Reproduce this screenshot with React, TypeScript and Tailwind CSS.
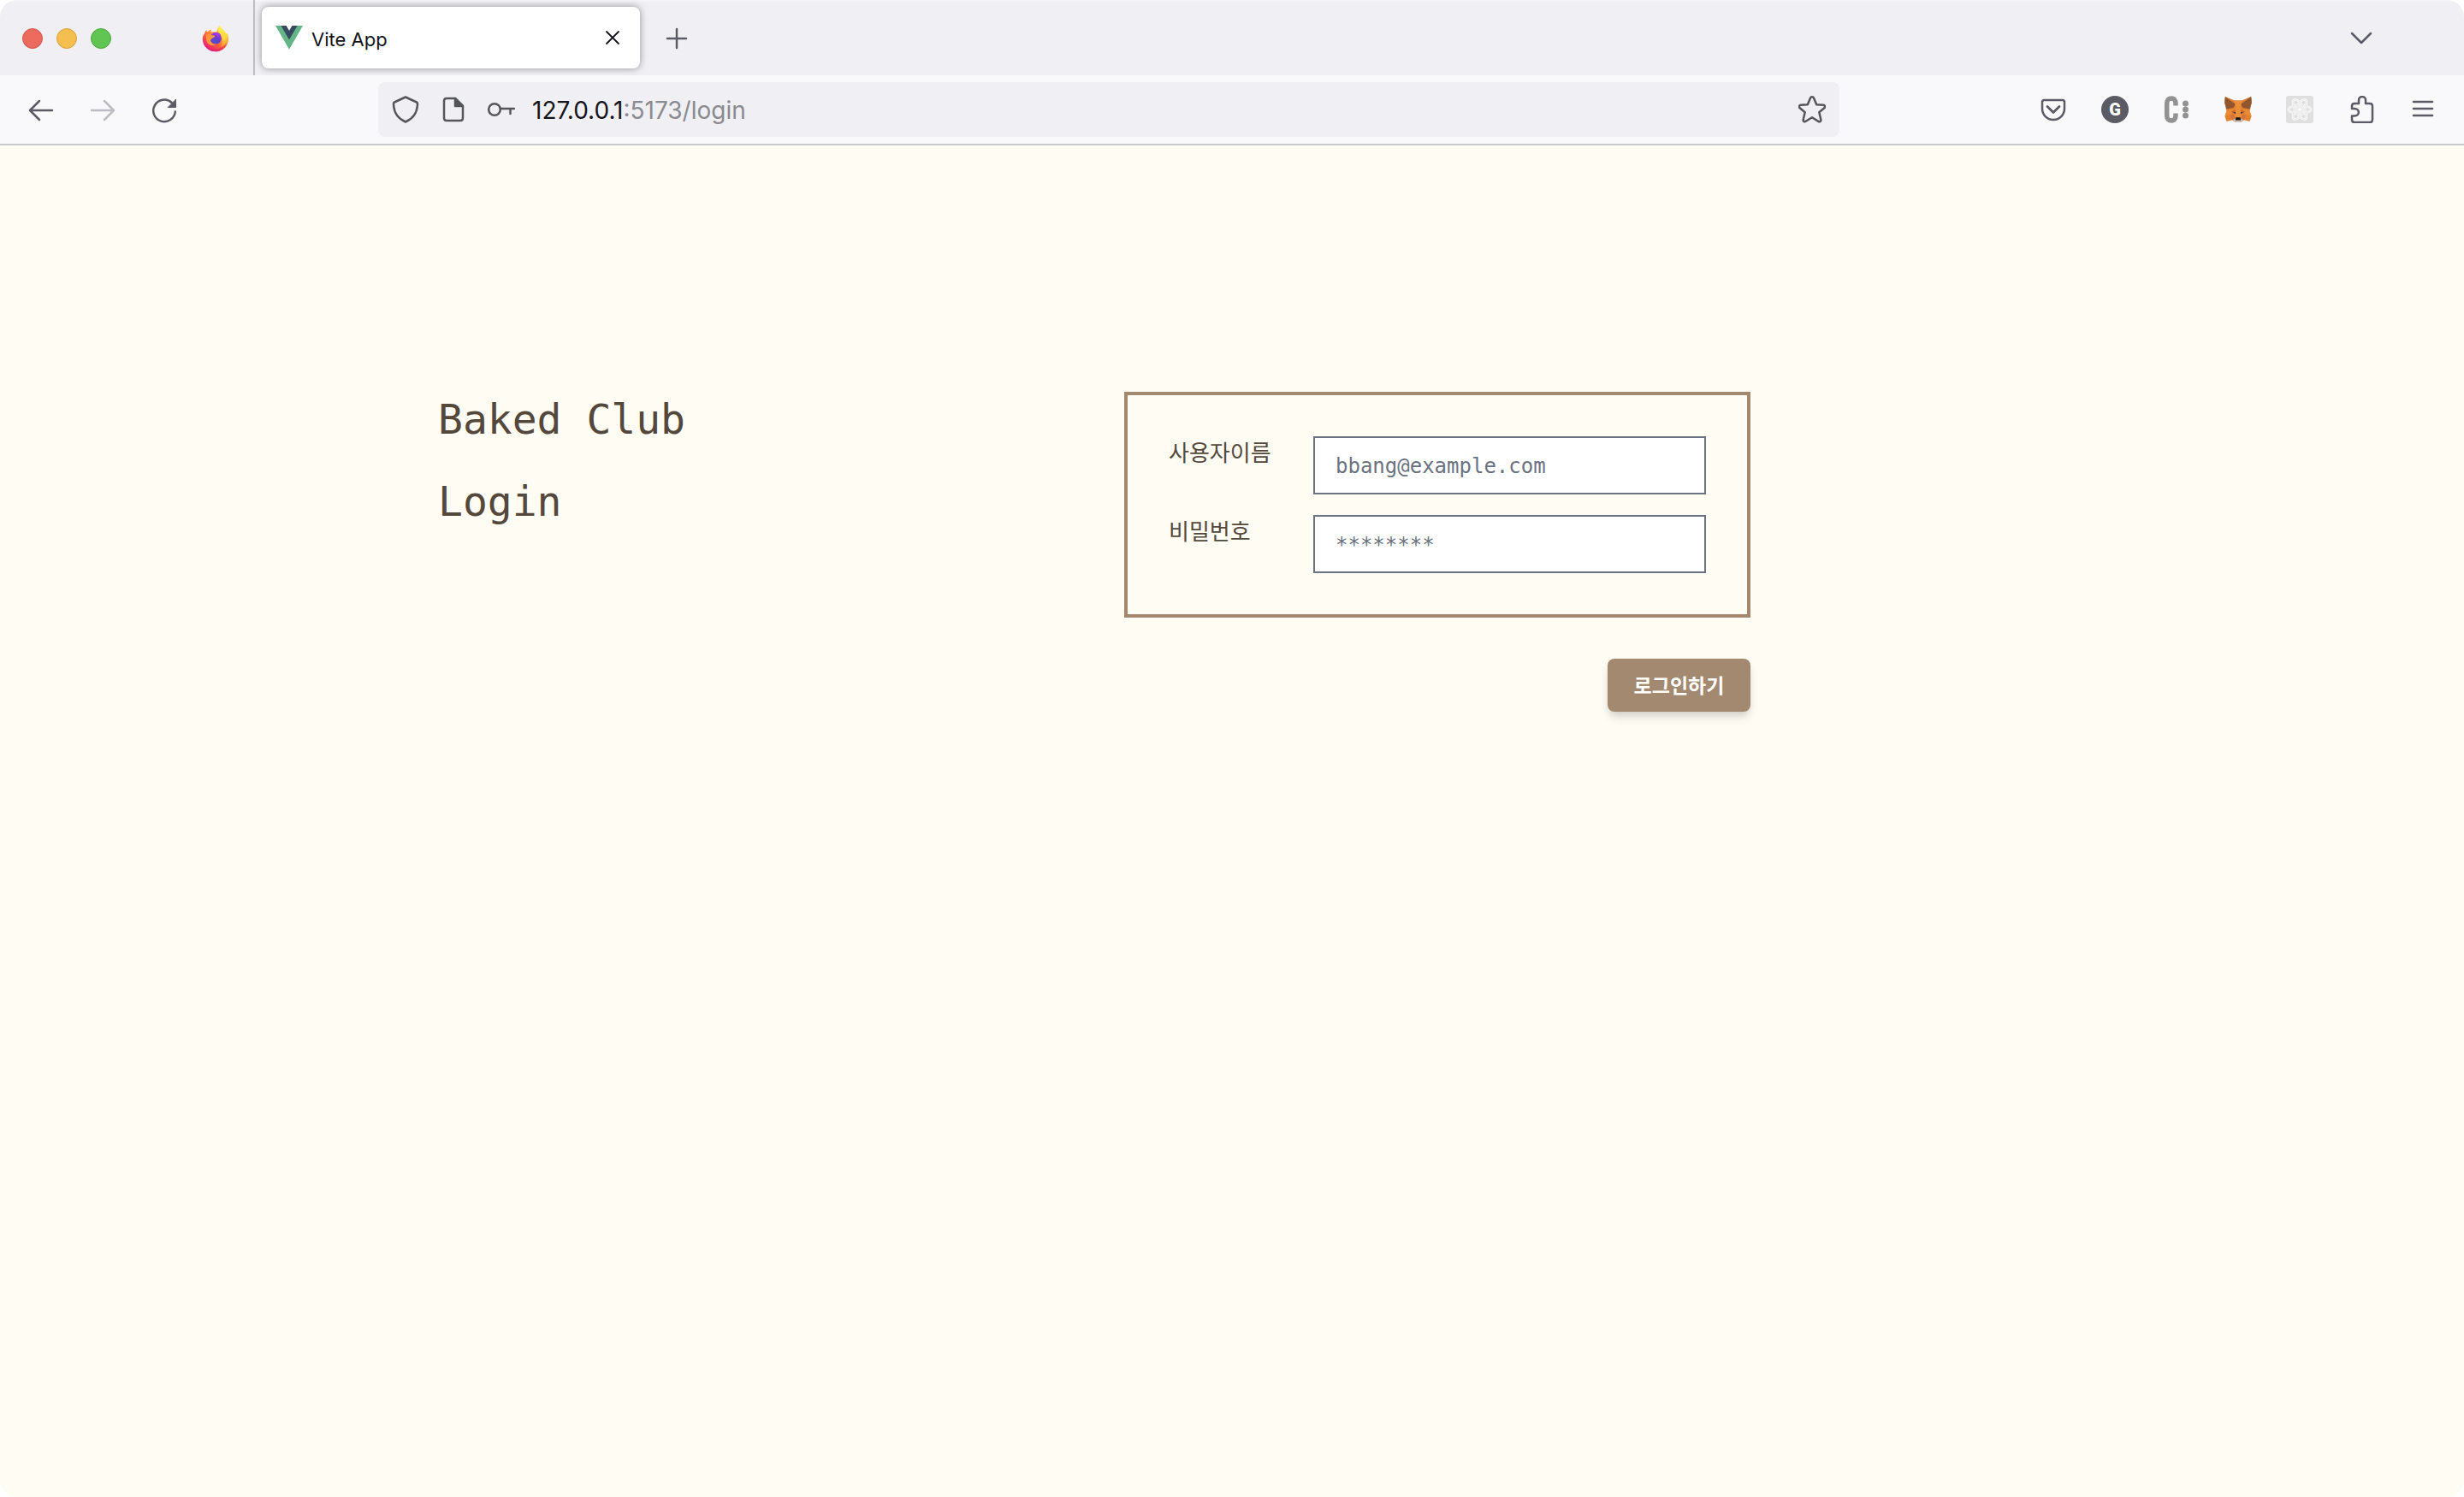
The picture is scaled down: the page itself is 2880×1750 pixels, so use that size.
import React from 'react';

function FirefoxLogo() {
  return (
    <svg viewBox="0 0 32 32" className="size-8" aria-hidden="true">
      <defs>
        <linearGradient id="ff-body" x1="0.85" y1="0.1" x2="0.2" y2="0.95">
          <stop offset="0" stopColor="#fff44f" />
          <stop offset="0.35" stopColor="#ffa436" />
          <stop offset="0.65" stopColor="#ff5b3a" />
          <stop offset="1" stopColor="#e31587" />
        </linearGradient>
        <linearGradient id="ff-flame" x1="0.5" y1="0" x2="0.6" y2="1">
          <stop offset="0" stopColor="#fff44f" />
          <stop offset="0.6" stopColor="#ffd43f" />
          <stop offset="1" stopColor="#ff9340" />
        </linearGradient>
        <radialGradient id="ff-globe" cx="0.4" cy="0.8" r="0.9">
          <stop offset="0" stopColor="#4f52c9" />
          <stop offset="0.5" stopColor="#6b3bd0" />
          <stop offset="1" stopColor="#b13be0" />
        </radialGradient>
      </defs>
      <path
        d="M3 10.5C3.3 8.600 4 7.200 5.200 6.200C5.300 7.400 5.800 8 6.500 8.300C7.800 6.800 9.400 6 11.200 5.700C10.600 6.500 10.400 7.300 10.600 8.200H17C17.500 5 19.500 2.500 20.800 .500C21.300 3.500 24 5.200 26.300 7.500C27.500 8.700 28.500 10 29 11.500L29.300 8.900C31 12 31.300 15.500 31 18C30 26 23.500 31.300 16 31.300C7.500 31.300 .800 25 .800 16.500C.800 14.300 1.500 12 3 10.500Z"
        fill="url(#ff-body)"
      />
      <path
        d="M20.800 .500C21.300 3.500 24 5.200 26.300 7.500C29.500 11 30.500 16 28 21C26.500 24 24 25.500 22 25.800C25 22 24.800 15 21 11C18.500 8.500 19 3.500 20.800 .500Z"
        fill="url(#ff-flame)"
      />
      <circle cx="16.200" cy="15.800" r="6.800" fill="url(#ff-globe)" />
      <path d="M13 9.500C16 8 20.500 8.800 22.300 12C20.500 11.300 19.500 11.500 19 12C20 13 20 14 19.500 15C17.800 13.500 17 11 13 9.500Z" fill="#a63ce6" />
      <path
        d="M4.800 12C7 10.600 9.500 10.800 11.500 12.300C13 12.200 15 12.400 15.400 13.300C15 14.600 13.500 15 12 15.700C11.300 16.400 11 17.300 10 17.600C9.800 20.500 13 23.300 16.500 22.600C12.500 25.800 6 23.500 5.200 17.500C5 15.500 5 13.500 4.800 12Z"
        fill="#ff9a3c"
      />
      <path d="M2 20C4.500 27 10.500 29 16 28.500C22 28 26.500 25 29 22C27 28 21.500 31.300 16 31.300C9.500 31.300 4 27.500 2 20Z" fill="#e0226b" opacity=".65" />
    </svg>
  );
}

function VueLogo() {
  return (
    <svg viewBox="0 0 32 28" className="h-7 w-8" aria-hidden="true">
      <path d="M0 0H12.500L16 6L19.500 0H32L16 27.700Z" fill="#64b687" />
      <path d="M6.400 0H12.500L16 6L19.500 0H25.600L16 16.600Z" fill="#384960" />
    </svg>
  );
}

function FoxLogo() {
  return (
    <svg viewBox="0 0 32 32" className="size-8" aria-hidden="true">
      <path d="M.800 1L12 5.500H20L31.200 1L31.800 8L30.500 14L29.500 18L31.500 24L29.500 30L23 28.300L19.500 31H12.500L9 28.300L2.500 30L.500 24L2.500 18L1.500 14L.200 8Z" fill="#e2812f" />
      <path d="M.800 1L13 9.800L10.500 14L2.500 15.500L.200 8Z" fill="#8f5630" />
      <path d="M31.200 1L19 9.800L21.500 14L29.500 15.500L31.800 8Z" fill="#8f5630" />
      <path d="M12 5.500H20L18.800 16L19.500 25H12.500L13.200 16Z" fill="#ea8e3a" />
      <path d="M2.500 18L10.500 15L7 22L.500 24Z" fill="#e98a35" />
      <path d="M29.500 18L21.500 15L25 22L31.500 24Z" fill="#e98a35" />
      <path d="M7.500 18.200L12.300 16.600L13.500 21L10.800 20.500Z" fill="#cf6a2c" />
      <path d="M24.500 18.200L19.700 16.600L18.500 21L21.200 20.500Z" fill="#cf6a2c" />
      <path d="M7 22.500L11 22L12.300 26.500L9 28.300Z" fill="#d3743a" />
      <path d="M25 22.500L21 22L19.700 26.500L23 28.300Z" fill="#d3743a" />
      <path d="M10 18.800L13 19.300L12.800 21.200Z" fill="#2b3742" />
      <path d="M22 18.800L19 19.300L19.200 21.200Z" fill="#2b3742" />
      <path d="M9.500 28.300L13 26.500H19L22.500 28.300L19.500 31H12.500Z" fill="#cbbcb0" />
      <path d="M13.300 25.300H18.700L19.200 28.500H12.800Z" fill="#161616" />
    </svg>
  );
}

function ReactBadge() {
  return (
    <svg viewBox="0 0 32 32" className="size-8" aria-hidden="true">
      <rect width="32" height="32" rx="3" fill="#dfdfdf" />
      <g fill="none" stroke="#f8f8f8" strokeWidth="2.800">
        <ellipse cx="16" cy="16" rx="13" ry="5" />
        <ellipse cx="16" cy="16" rx="13" ry="5" transform="rotate(60 16 16)" />
        <ellipse cx="16" cy="16" rx="13" ry="5" transform="rotate(120 16 16)" />
      </g>
      <g fill="none" stroke="#dfdfdf" strokeWidth=".600">
        <ellipse cx="16" cy="16" rx="13" ry="5" />
        <ellipse cx="16" cy="16" rx="13" ry="5" transform="rotate(60 16 16)" />
        <ellipse cx="16" cy="16" rx="13" ry="5" transform="rotate(120 16 16)" />
      </g>
      <circle cx="16" cy="16" r="2.800" fill="#f8f8f8" />
    </svg>
  );
}

type LineProps = { children: React.ReactNode; className?: string };

function Line({ children, className = 'text-[#5b5b66]' }: LineProps) {
  return (
    <svg
      viewBox="0 0 32 32"
      className={'size-8 ' + className}
      fill="none"
      stroke="currentColor"
      strokeWidth="2.500"
      strokeLinecap="round"
      strokeLinejoin="round"
      aria-hidden="true"
    >
      {children}
    </svg>
  );
}

function ToolButton({ label, children }: { label: string; children: React.ReactNode }) {
  return (
    <button type="button" aria-label={label} className="flex h-16 w-[72px] shrink-0 items-center justify-center">
      {children}
    </button>
  );
}

function UrlButton({ label, children }: { label: string; children: React.ReactNode }) {
  return (
    <button type="button" aria-label={label} className="flex h-16 w-14 shrink-0 items-center justify-center">
      {children}
    </button>
  );
}

function TabBar() {
  return (
    <header className="flex h-22 items-center border-t-2 border-[#f5f5f8] bg-[#f0f0f4]">
      <div className="flex w-74 shrink-0 items-center justify-between pr-7 pl-[26px]">
        <div className="flex gap-4">
          <button type="button" aria-label="Close window" className="size-6 rounded-full border border-[#d5564a] bg-[#ec6a5e]" />
          <button type="button" aria-label="Minimize window" className="size-6 rounded-full border border-[#d9a13c] bg-[#f4bf4f]" />
          <button type="button" aria-label="Zoom window" className="size-6 rounded-full border border-[#4aa73c] bg-[#61c554]" />
        </div>
        <button type="button" aria-label="Firefox tab">
          <FirefoxLogo />
        </button>
      </div>
      <div className="-mt-0.5 h-22 w-0.5 bg-[#bdbdc1]" />
      <div className="-mt-0.5 ml-2 flex h-18 w-[442px] items-center rounded-lg bg-white pr-4 pl-4 shadow-[0_0_8px_rgba(0,0,0,0.4)]">
        <VueLogo />
        <span className="ml-2.5 flex-1 pt-1 font-['Inter'] text-[22px] leading-8 text-[#15141a]">Vite App</span>
        <button type="button" aria-label="Close tab">
          <Line className="text-[#15141a]">
            <path d="M9 9L23 23M23 9L9 23" strokeWidth="1.800" />
          </Line>
        </button>
      </div>
      <button type="button" aria-label="New tab" className="ml-[27px]">
        <Line>
          <path d="M16 5V27M5 16H27" />
        </Line>
      </button>
      <button type="button" aria-label="List all tabs" className="mr-26 ml-auto">
        <Line>
          <path d="M5 10L16 21L27 10" />
        </Line>
      </button>
    </header>
  );
}

function NavBar() {
  return (
    <nav className="flex h-[82px] items-center border-b-2 border-[#cacace] bg-[#f9f9fb]">
      <div className="flex w-[442px] shrink-0 pl-3">
        <ToolButton label="Back">
          <Line>
            <path d="M29 17H3M14 6L3 17L14 28" />
          </Line>
        </ToolButton>
        <ToolButton label="Forward">
          <Line className="text-[#bcbcc2]">
            <path d="M3 17H29M18 6L29 17L18 28" />
          </Line>
        </ToolButton>
        <ToolButton label="Reload">
          <Line>
            <path d="M24.700 8A12.800 12.800 0 1 0 28.800 18.500" />
            <path d="M29.500 4.500V13.500H20.500Z" fill="currentColor" strokeWidth="1" />
          </Line>
        </ToolButton>
      </div>
      <div className="flex h-16 flex-1 items-center rounded-lg bg-[#f0f0f4] px-1">
        <UrlButton label="Tracking protection">
          <Line className="text-[#55555c]">
            <path d="M16 1.500L29 7.500C30.500 8.200 30 9.500 29.800 12C29 21 24 27 16 30.500C8 27 3 21 2.200 12C2 9.500 1.500 8.200 3 7.500Z" />
          </Line>
        </UrlButton>
        <UrlButton label="Site information">
          <Line className="text-[#55555c]">
            <path d="M18 3H8C6 3 5 4 5 6V26C5 28 6 29 8 29H24C26 29 27 28 27 26V12Z" />
            <path d="M18 3V12H27Z" fill="currentColor" />
          </Line>
        </UrlButton>
        <UrlButton label="Saved login">
          <Line className="text-[#55555c]">
            <circle cx="8" cy="16" r="6.800" />
            <path d="M15 15H31M26.500 15V21" />
          </Line>
        </UrlButton>
        <div
          role="textbox"
          aria-label="Address"
          contentEditable
          suppressContentEditableWarning
          spellCheck={false}
          className="flex-1 pt-0.5 pl-2 font-['Inter'] text-[28px] leading-10 whitespace-nowrap text-[#8a8a90]"
        >
          <span className="text-[#15141a]">127.0.0.1</span>:5173/login
        </div>
        <UrlButton label="Bookmark this page">
          <Line className="text-[#55555c]">
            <path d="M13.900 2.700C14.700 .900 17.300 .900 18.100 2.700L21.200 10.200L29.200 10.800C31.200 11 31.700 13 30.300 14.300L24.300 19.300L26.300 27.700C26.700 29.700 25 30.800 23.300 29.800L16 25.300L8.700 29.800C7 30.800 5.300 29.700 5.700 27.700L7.700 19.300L1.700 14.300C.300 13 .800 11 2.800 10.800L10.800 10.200Z" />
          </Line>
        </UrlButton>
      </div>
      <div className="flex w-[730px] shrink-0 justify-end pr-3">
        <ToolButton label="Save to Pocket">
          <Line>
            <path d="M5.500 5H26.500C28 5 29 6 29 7.500V15C29 22 23.500 28 16 28S3 22 3 15V7.500C3 6 4 5 5.500 5Z" />
            <path d="M9 12.500L16 19.500L23 12.500" strokeWidth="2.800" />
          </Line>
        </ToolButton>
        <ToolButton label="G extension">
          <span className="flex size-8 items-center justify-center rounded-full bg-[#5b5b66] font-['Roboto'] text-xl leading-8 font-black text-white">
            G
          </span>
        </ToolButton>
        <ToolButton label="C extension">
          <svg viewBox="0 0 32 32" className="size-8" aria-hidden="true">
            <path d="M15 11.500V9C15 5 13 3 10 3S4.700 5 4.700 9V23C4.700 27 7 29 10 29S15 27 15 23V20.500" fill="none" stroke="#929292" strokeWidth="5.500" />
            <circle cx="26.500" cy="9" r="3.500" fill="#929292" />
            <circle cx="26.500" cy="16" r="3.500" fill="#929292" />
            <circle cx="26.500" cy="23" r="3.500" fill="#929292" />
          </svg>
        </ToolButton>
        <ToolButton label="Fox wallet">
          <FoxLogo />
        </ToolButton>
        <ToolButton label="React developer tools">
          <ReactBadge />
        </ToolButton>
        <ToolButton label="Extensions">
          <Line>
            <path d="M8 31H26C28 31 29 30 29 28V12C29 10 28 9 26 9H21V5C21 -.300 13 -.300 13 5V9H8C6 9 5 10 5 12V15H8C14.500 15 14.500 23.500 8 23.500H5V28C5 30 6 31 8 31Z" />
          </Line>
        </ToolButton>
        <ToolButton label="Open menu">
          <Line>
            <path d="M5 7H27M5 15H27M5 23H27" />
          </Line>
        </ToolButton>
      </div>
    </nav>
  );
}

const fieldClass =
  "h-17 w-full min-w-0 border-2 border-[#6b7280] bg-white px-6 pt-0.5 font-['DejaVu_Sans_Mono',monospace] text-2xl text-[#54483c] placeholder:text-[#6b7280] placeholder:opacity-100";
const labelClass = "font-['Noto_Sans_CJK_KR',sans-serif] text-[26px] leading-9 whitespace-nowrap";

function LoginPage() {
  return (
    <main className="flex-1 bg-[#fffcf4] pt-72 text-[#54483c]">
      <div className="mx-auto grid max-w-[1856px] grid-cols-[802px_1fr]">
        <h1 className="flex flex-col gap-8 font-['DejaVu_Sans_Mono',monospace] text-5xl leading-16">
          <span>Baked Club</span>
          <span>Login</span>
        </h1>
        <form className="flex w-[732px] flex-col items-end gap-12" onSubmit={(e) => e.preventDefault()}>
          <div className="grid w-full grid-cols-[121px_1fr] gap-x-12 gap-y-6 border-4 border-[#a48971] p-12">
            <label htmlFor="username" className={labelClass}>
              사용자이름
            </label>
            <input id="username" type="email" placeholder="bbang@example.com" className={fieldClass} />
            <label htmlFor="password" className={labelClass}>
              비밀번호
            </label>
            <input id="password" type="password" placeholder="********" className={fieldClass} />
          </div>
          <button
            type="submit"
            className="h-[62px] w-[167px] rounded-lg bg-[#a48971] pb-0.5 font-['Noto_Sans_CJK_KR',sans-serif] text-[23px] leading-8 font-bold text-white shadow-[0_8px_12px_-2px_rgba(0,0,0,0.12),0_4px_8px_-2px_rgba(0,0,0,0.1)]"
          >
            로그인하기
          </button>
        </form>
      </div>
    </main>
  );
}

export default function App() {
  return (
    <div className="bg-white">
      <div className="flex min-h-screen flex-col overflow-hidden rounded-[20px]">
        <TabBar />
        <NavBar />
        <LoginPage />
      </div>
    </div>
  );
}
